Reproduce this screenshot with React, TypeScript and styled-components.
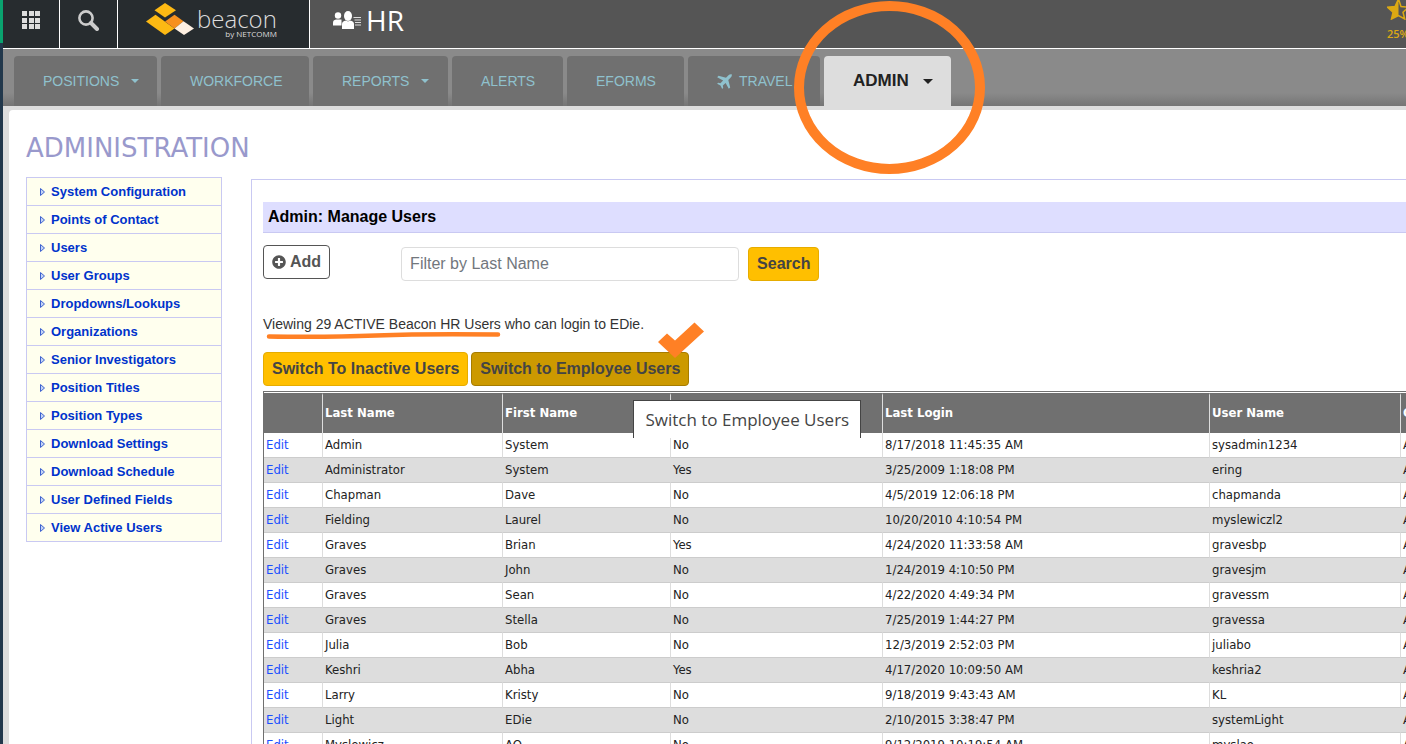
import React from "react";
import styled, { createGlobalStyle } from "styled-components";
import { FaPlusCircle } from "react-icons/fa";

const arial = `"Liberation Sans", Arial, sans-serif`;
const humanist = `"Open Sans", "Segoe UI", sans-serif`;
const tableFont = `"DejaVu Sans Condensed", Tahoma, sans-serif`;
const orange = "#ff8025";
const lilac = "#c9c9f2";

const GlobalStyle = createGlobalStyle`
  * { box-sizing: border-box; }
  html, body { margin: 0; overflow: hidden; }
  body { background: #dddddd; font-family: ${arial}; color: #333; }
  a { text-decoration: none; }
`;

const Shell = styled.div`
  display: grid;
  grid-template-columns: 3px minmax(0, 1fr);
  min-height: 100vh;
`;

const Edge = styled.div`
  background: linear-gradient(#0aa36f 43px, #22384c 43px);
`;

const Page = styled.div`
  display: flex;
  flex-direction: column;
  min-width: 0;
`;

const TopBar = styled.header`
  display: flex;
  height: 49px;
  background: #555555;
  border-bottom: 1px solid #ffffff;
`;

const IconButton = styled.button<{ $width: number }>`
  display: flex;
  align-items: center;
  justify-content: center;
  width: ${(p) => p.$width}px;
  padding: 0 0 8px;
  background: #272c2f;
  border: 0;
  border-right: 1px solid #ffffff;
`;

const Brand = styled.a`
  display: flex;
  gap: 3px;
  width: 192px;
  padding: 3px 0 0 28px;
  background: #272c2f;
  border-right: 1px solid #ffffff;
  color: #dddddd;
  font-family: ${humanist};
`;

const BrandText = styled.span`
  display: flex;
  flex-direction: column;
  align-items: flex-end;
  padding-top: 4px;
`;

const BrandName = styled.span`
  font-size: 24px;
  font-weight: 300;
  line-height: 23px;
`;

const BrandBy = styled.span`
  font-size: 8px;
  line-height: 8px;
`;

const Module = styled.div`
  display: flex;
  align-items: center;
  gap: 5px;
  padding: 0 0 8px 23px;
  color: #ffffff;
  font-family: ${humanist};
  font-size: 28px;
  line-height: 40px;
`;

const Rating = styled.div`
  display: flex;
  flex-direction: column;
  width: 19px;
  margin-left: auto;
  overflow: hidden;
  color: #dca913;
  font: 600 11px/14px ${humanist};

  svg { flex: none; margin-bottom: 7px; }
`;

const Nav = styled.nav`
  display: flex;
  gap: 4px;
  height: 57px;
  padding: 7px 0 0 11px;
  background: linear-gradient(#8a8a8a 44px, #757575 57px);
`;

const Tab = styled.a<{ $width: number; $active?: boolean }>`
  position: relative;
  display: flex;
  flex: none;
  align-items: center;
  width: ${(p) => p.$width}px;
  padding-left: 29px;
  border-radius: 4px 4px 0 0;
  background: ${(p) => (p.$active ? "#dddddd" : "#707070")};
  color: ${(p) => (p.$active ? "#222222" : "#8fc1cd")};
  font-size: ${(p) => (p.$active ? 17 : 14)}px;
  font-weight: ${(p) => (p.$active ? 700 : 400)};
`;

const Caret = styled.span<{ $big?: boolean }>`
  margin-left: ${(p) => (p.$big ? 14 : 12)}px;
  border: ${(p) => (p.$big ? 5 : 4)}px solid transparent;
  border-top-color: currentColor;
  border-bottom: 0;
`;

const Ring = styled.svg`
  position: absolute;
  left: -30px;
  top: -55px;
  z-index: 2;
  pointer-events: none;
`;

const Plane = styled.svg`
  margin-right: 7px;
`;

const Content = styled.main`
  flex: 1;
  margin: 4px 0 0 6px;
  padding: 22px 0 0 17px;
  background: #ffffff;
  border-radius: 4px 0 0 0;
`;

const Title = styled.h1`
  margin: 0 0 13px;
  color: #9999cc;
  font: 400 26px/32px "DejaVu Sans", Verdana, sans-serif;
`;

const Columns = styled.div`
  display: flex;
  align-items: flex-start;
  gap: 29px;
`;

const SideMenu = styled.ul`
  flex: none;
  width: 196px;
  margin: 0;
  padding: 0;
  list-style: none;
  border: 1px solid ${lilac};
  border-bottom: 0;
`;

const SideItem = styled.li`
  height: 28px;
  background: #ffffee;
  border-bottom: 1px solid ${lilac};
`;

const SideLink = styled.a`
  display: flex;
  align-items: center;
  gap: 6px;
  height: 27px;
  padding-left: 13px;
  color: #0033cc;
  font-size: 13px;
  font-weight: 700;
`;

const Panel = styled.section`
  flex: 1;
  min-width: 0;
  margin-top: 2px;
  padding: 22px 0 0 11px;
  border: solid ${lilac};
  border-width: 1px 0 0 1px;
`;

const PanelTitle = styled.h2`
  margin: 0 0 12px;
  padding-left: 5px;
  background: #dedeff;
  border-bottom: 1px solid ${lilac};
  color: #000000;
  font-size: 16px;
  line-height: 30px;
`;

const Toolbar = styled.form`
  display: flex;
  align-items: flex-start;
  height: 70px;
`;

const Button = styled.button<{ $tone: "plain" | "gold" | "dark" }>`
  display: flex;
  align-items: center;
  gap: 4px;
  height: 34px;
  padding: 0 8px;
  border: 1px solid ${(p) => ({ plain: "#555555", gold: "#e6ac00", dark: "#a67c00" })[p.$tone]};
  border-radius: 4px;
  background: ${(p) => ({ plain: "#ffffff", gold: "#ffbf00", dark: "#cc9900" })[p.$tone]};
  color: ${(p) => (p.$tone === "plain" ? "#555555" : "#444444")};
  font: 700 16px/20px ${arial};
  white-space: nowrap;
`;

const SearchGroup = styled.div`
  display: flex;
  gap: 9px;
  margin: 2px 0 0 71px;
`;

const Filter = styled.input`
  width: 338px;
  height: 34px;
  padding: 0 8px;
  border: 1px solid #dddddd;
  border-radius: 4px;
  font: 16px/20px ${arial};

  &::placeholder { color: #72777d; opacity: 1; }
`;

const Summary = styled.p`
  position: relative;
  margin: 0 0 19px;
  color: #333333;
  font-size: 14px;
  line-height: 18px;
`;

const Underline = styled.svg`
  position: absolute;
  left: 3px;
  top: 16px;
`;

const Switches = styled.div`
  display: flex;
  gap: 3px;
  margin-bottom: 5px;
`;

const Hovered = styled.div`
  position: relative;
`;

const Tick = styled.svg`
  position: absolute;
  right: -15px;
  top: -30px;
`;

const Tooltip = styled.div`
  position: absolute;
  left: 162px;
  top: 48px;
  z-index: 1;
  width: 228px;
  height: 38px;
  border: 1px solid #444444;
  border-bottom: 0;
  background: #ffffff;
  color: #444444;
  font: 17px/37px ${humanist};
  text-align: center;
  white-space: nowrap;
`;

const Table = styled.table`
  width: 100%;
  table-layout: fixed;
  border-spacing: 0;
  border: solid #707070;
  border-width: 1px 0 0 1px;
  padding-top: 1px;
  font: 13px/24px ${tableFont};
  color: #222222;

  th, td {
    padding: 0 2px;
    text-align: left;
    white-space: nowrap;
    border-left: 1px solid #dddddd;
  }
  th:first-child, td:first-child { border-left: 0; }
  th {
    height: 40px;
    padding-bottom: 2px;
    border-top: 2px solid #707070;
    background: #707070;
    color: #ffffff;
  }
  td { border-bottom: 1px solid #cccccc; }
  tbody tr:nth-child(even) { background: #dddddd; }
  a { color: #1a4fff; }
`;

const Col = styled.col<{ $width?: number }>`
  width: ${(p) => (p.$width ? `${p.$width}px` : "auto")};
`;

const menu = [
  "System Configuration", "Points of Contact", "Users", "User Groups", "Dropdowns/Lookups",
  "Organizations", "Senior Investigators", "Position Titles", "Position Types",
  "Download Settings", "Download Schedule", "User Defined Fields", "View Active Users",
];

const tabs = [
  { label: "POSITIONS", width: 143, caret: true },
  { label: "WORKFORCE", width: 148 },
  { label: "REPORTS", width: 135, caret: true },
  { label: "ALERTS", width: 111 },
  { label: "EFORMS", width: 117 },
  { label: "TRAVEL", width: 132, plane: true },
  { label: "ADMIN", width: 127, caret: true, active: true },
];

const users = [
  ["Admin", "System", "No", "8/17/2018 11:45:35 AM", "sysadmin1234"],
  ["Administrator", "System", "Yes", "3/25/2009 1:18:08 PM", "ering"],
  ["Chapman", "Dave", "No", "4/5/2019 12:06:18 PM", "chapmanda"],
  ["Fielding", "Laurel", "No", "10/20/2010 4:10:54 PM", "myslewiczl2"],
  ["Graves", "Brian", "Yes", "4/24/2020 11:33:58 AM", "gravesbp"],
  ["Graves", "John", "No", "1/24/2019 4:10:50 PM", "gravesjm"],
  ["Graves", "Sean", "No", "4/22/2020 4:49:34 PM", "gravessm"],
  ["Graves", "Stella", "No", "7/25/2019 1:44:27 PM", "gravessa"],
  ["Julia", "Bob", "No", "12/3/2019 2:52:03 PM", "juliabo"],
  ["Keshri", "Abha", "Yes", "4/17/2020 10:09:50 AM", "keshria2"],
  ["Larry", "Kristy", "No", "9/18/2019 9:43:43 AM", "KL"],
  ["Light", "EDie", "No", "2/10/2015 3:38:47 PM", "systemLight"],
  ["Myslewicz", "AO", "No", "9/12/2019 10:19:54 AM", "myslao"],
];

const GridIcon = () => (
  <svg width="18" height="18" fill="#dddddd">
    {[0, 7, 13].map((y) => [0, 7, 13].map((x) => <rect key={`${x}-${y}`} x={x} y={y} width="5" height="5" />))}
  </svg>
);

const SearchIcon = () => (
  <svg width="22" height="21" viewBox="0 0 22 21" fill="none" stroke="#cccccc">
    <circle cx="8" cy="8" r="6.6" strokeWidth="2.6" />
    <path d="M13 13l6 6" strokeWidth="4" strokeLinecap="round" />
  </svg>
);

const BeaconMark = () => (
  <svg width="48" height="33" viewBox="0 0 48 33">
    <path d="M19 0l11 7.2-11 7.3L8.500 7.200z" fill="#fdb913" />
    <path d="M9.500 11.700L28.500 25.500 19 32 0 18.500z" fill="#fdb913" />
    <path d="M28.500 11.700l9 6.500-9 7.300-9.500-7z" fill="#f7901e" />
    <path d="M37.500 18.200L48 25.500 38 32l-9.500-6.500z" fill="#fff0e2" />
  </svg>
);

const PeopleIcon = () => (
  <svg width="28" height="18" viewBox="0 0 28 18" fill="#ffffff">
    <circle cx="5" cy="4.500" r="3.200" />
    <path d="M0 14.500V11.500Q0 9 3 8.500h5.500V14.500z" />
    <ellipse cx="15" cy="5" rx="4" ry="5" />
    <path d="M9 18v-5q0-3 4-3.500l2 1 2-1q4 .5 4 3.500v5z" />
    <path d="M20.500 6.500H28M21.500 9H28M22 11.500h6M22 14h6" stroke="#dddddd" strokeWidth="1.200" />
  </svg>
);

const PlaneIcon = () => (
  <Plane width="15" height="15" viewBox="0 0 15 15" fill="currentColor">
    <path d="M14.700.3q.6 1.700-1.200 3.500L11.300 6l1.900 7.500-1.400 1.300L8.600 8.900 5.800 11.600l.4 2.200-1 1.100L3.500 11.500.100 9.800l1.100-1 2.200.4L6.100 6.400.200 3.200l1.300-1.400L9 3.700l2.200-2.200Q13-.3 14.700.3z" />
  </Plane>
);

const HalfStar = () => (
  <svg width="22" height="20" viewBox="0 0 22 20">
    <path d="M11.500 -1L14 6.500 21.500 7.300 16 12.300 17.700 19 11.500 15.500 4.500 19 6 12.300.5 7.300 8 6.500z" fill="none" stroke="#dca913" strokeWidth="1.500" />
    <path d="M11.500 -1V15.500L4.500 19 6 12.300.5 7.300 8 6.500z" fill="#dca913" />
  </svg>
);

const Bullet = () => (
  <svg width="5" height="8" viewBox="0 0 5 8">
    <path d="M.5 .5v7L4.500 4z" fill="#c4d4f4" stroke="#3f63cf" />
  </svg>
);

export default function App() {
  return (
    <>
      <GlobalStyle />
      <Shell>
        <Edge />
        <Page>
          <TopBar>
            <IconButton $width={57} aria-label="Applications"><GridIcon /></IconButton>
            <IconButton $width={58} aria-label="Search"><SearchIcon /></IconButton>
            <Brand href="#">
              <BeaconMark />
              <BrandText>
                <BrandName>beacon</BrandName>
                <BrandBy>by NETCOMM</BrandBy>
              </BrandText>
            </Brand>
            <Module><PeopleIcon />HR</Module>
            <Rating><HalfStar />25%</Rating>
          </TopBar>
          <Nav>
            {tabs.map((t) => (
              <Tab key={t.label} href="#" $width={t.width} $active={t.active}>
                {t.plane && <PlaneIcon />}
                {t.label}
                {t.caret && <Caret $big={t.active} />}
                {t.active && (
                  <Ring width="192" height="174" viewBox="0 0 192 174">
                    <ellipse cx="95.500" cy="86.500" rx="90.500" ry="81.500" fill="none" stroke={orange} strokeWidth="10" />
                  </Ring>
                )}
              </Tab>
            ))}
          </Nav>
          <Content>
            <Title>ADMINISTRATION</Title>
            <Columns>
              <SideMenu>
                {menu.map((m) => (
                  <SideItem key={m}><SideLink href="#"><Bullet />{m}</SideLink></SideItem>
                ))}
              </SideMenu>
              <Panel>
                <PanelTitle>Admin: Manage Users</PanelTitle>
                <Toolbar onSubmit={(e) => e.preventDefault()}>
                  <Button type="button" $tone="plain"><FaPlusCircle size={14} />Add</Button>
                  <SearchGroup>
                    <Filter type="text" aria-label="Filter by Last Name" placeholder="Filter by Last Name" />
                    <Button type="submit" $tone="gold">Search</Button>
                  </SearchGroup>
                </Toolbar>
                <Summary>
                  Viewing 29 ACTIVE Beacon HR Users who can login to EDie.
                  <Underline width="235" height="8" viewBox="0 0 235 8">
                    <path d="M3 5.500Q60 6.500 110 4.500T232 3.500" fill="none" stroke={orange} strokeWidth="4.500" strokeLinecap="round" />
                  </Underline>
                </Summary>
                <Switches>
                  <Button type="button" $tone="gold">Switch To Inactive Users</Button>
                  <Hovered>
                    <Button type="button" $tone="dark">Switch to Employee Users</Button>
                    <Tick width="46" height="36" viewBox="0 0 46 36">
                      <path d="M0 20L9 11.500 17 18.500 36.500 0.500 46 9.500 17 36z" fill={orange} />
                    </Tick>
                    <Tooltip role="tooltip">Switch to Employee Users</Tooltip>
                  </Hovered>
                </Switches>
                <Table>
                  <colgroup>
                    {[58, 180, 168, 212, 327, 191].map((w) => <Col key={w} $width={w} />)}
                    <Col />
                  </colgroup>
                  <thead>
                    <tr>
                      <th /><th>Last Name</th><th>First Name</th><th /><th>Last Login</th><th>User Name</th><th>C</th>
                    </tr>
                  </thead>
                  <tbody>
                    {users.map((u) => (
                      <tr key={u[4]}>
                        <td><a href="#">Edit</a></td>
                        {u.map((v, i) => <td key={i}>{v}</td>)}
                        <td>A</td>
                      </tr>
                    ))}
                  </tbody>
                </Table>
              </Panel>
            </Columns>
          </Content>
        </Page>
      </Shell>
    </>
  );
}
